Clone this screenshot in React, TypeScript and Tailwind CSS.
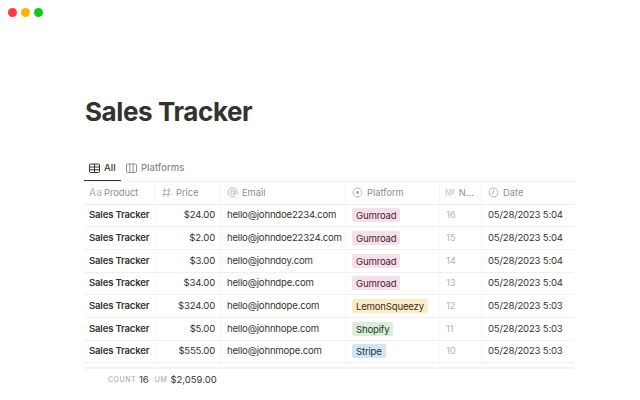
import * as React from "react";

const rows = [
  { price: "$24.00", email: "hello@johndoe2234.com", platform: "Gumroad", n: 16, date: "05/28/2023 5:04" },
  { price: "$2.00", email: "hello@johndoe22324.com", platform: "Gumroad", n: 15, date: "05/28/2023 5:04" },
  { price: "$3.00", email: "hello@johndoy.com", platform: "Gumroad", n: 14, date: "05/28/2023 5:04" },
  { price: "$34.00", email: "hello@johndpe.com", platform: "Gumroad", n: 13, date: "05/28/2023 5:04" },
  { price: "$324.00", email: "hello@johndope.com", platform: "LemonSqueezy", n: 12, date: "05/28/2023 5:03" },
  { price: "$5.00", email: "hello@johnhope.com", platform: "Shopify", n: 11, date: "05/28/2023 5:03" },
  { price: "$555.00", email: "hello@johnmope.com", platform: "Stripe", n: 10, date: "05/28/2023 5:03" },
];

const tagClass: Record<string, string> = {
  Gumroad: "bg-[#f5e0e9] text-[#4c2337]",
  LemonSqueezy: "bg-[#fbecc8] text-[#402c1b]",
  Shopify: "bg-[#dbeddb] text-[#1c3829]",
  Stripe: "bg-[#d3e5ef] text-[#183347]",
};

const HeadIcon = ({ children }: { children: React.ReactNode }) => (
  <svg width="11" height="11" viewBox="0 0 12 12" fill="none" stroke="#b0afac" strokeWidth="1" className="shrink-0">
    {children}
  </svg>
);

export default function App() {
  return (
    <div className="w-[640px] h-[400px] overflow-hidden bg-white flex flex-col font-['Inter',sans-serif] text-[#37352f]">
      <div className="flex gap-[4px] pl-[8px] pt-[8px] h-[98px]">
        <span className="w-[9px] h-[9px] rounded-full bg-[#f83b45]" />
        <span className="w-[9px] h-[9px] rounded-full bg-[#fdb10a]" />
        <span className="w-[9px] h-[9px] rounded-full bg-[#12c81e]" />
      </div>

      <div className="pl-[85px] h-[61px]">
        <h1 className="text-[26px] leading-[28px] font-bold text-[#33322e] tracking-[-0.4px]">Sales Tracker</h1>
      </div>

      {/* view tabs */}
      <div className="ml-[84px] flex h-[22px] text-[9.5px] leading-[12px]">
        <div className="w-[37px] pl-[5px] pt-[3px] flex gap-[4px] items-start border-b-[1.5px] border-[#37352f] font-medium">
          <svg width="11" height="11" viewBox="0 0 11 11" fill="none" stroke="#37352f" strokeWidth="1" className="mt-[1px] shrink-0">
            <rect x="0.5" y="1" width="10" height="8.5" rx="1" />
            <path d="M0.5 4H10.5M0.5 6.8H10.5M5.5 1V9.5" />
          </svg>
          All
        </div>
        <div className="pl-[5px] pt-[3px] flex gap-[4px] items-start text-[#8a8986] font-medium">
          <svg width="11" height="11" viewBox="0 0 11 11" fill="none" stroke="#8f8e8a" strokeWidth="1" className="mt-[1px] shrink-0">
            <rect x="0.5" y="1" width="10" height="8.5" rx="1" />
            <path d="M3.8 1V9.5M7.2 1V9.5" />
          </svg>
          Platforms
        </div>
      </div>

      {/* table */}
      <div className="ml-[84px] w-[490px] text-[9.6px] tracking-[-0.2px]">
        <div className="flex h-[23.5px] items-center border-b border-t border-[#efefee] text-[#8f8e8a] tracking-[0px] text-[9.3px]">
          <div className="w-[71px] h-full flex items-center pl-[5px] border-r border-[#f3f3f2]">
            <span className="text-[#b0afac] text-[10px] w-[15px] tracking-[0.5px]">Aa</span>
            <span>Product</span>
          </div>
          <div className="w-[66px] h-full flex items-center gap-[4px] pl-[6px] border-r border-[#f3f3f2]">
            <HeadIcon>
              <path d="M4.2 1L3 11M8.7 1L7.5 11M1.2 4H10.8M1 8H10.5" />
            </HeadIcon>
            Price
          </div>
          <div className="w-[125px] h-full flex items-center gap-[4px] pl-[6px] border-r border-[#f3f3f2]">
            <HeadIcon>
              <circle cx="6" cy="6" r="2.2" />
              <path d="M8.2 3.8V7c0 1.7 2.8 1.5 2.8-1A5 5 0 1 0 8.8 10" />
            </HeadIcon>
            Email
          </div>
          <div className="w-[94px] h-full flex items-center gap-[4px] pl-[6px] border-r border-[#f3f3f2]">
            <HeadIcon>
              <circle cx="6" cy="6" r="4.8" />
              <circle cx="6" cy="6" r="1.6" fill="#a5a4a1" stroke="none" />
            </HeadIcon>
            Platform
          </div>
          <div className="w-[42px] h-full flex items-center gap-[3px] pl-[5px] border-r border-[#f3f3f2]">
            <span className="text-[#c4c3c0] text-[9px]">№</span>
            <span className="ml-[1px]">N...</span>
          </div>
          <div className="flex-1 h-full flex items-center gap-[4px] pl-[6px]">
            <HeadIcon>
              <circle cx="6" cy="6" r="4.8" />
              <path d="M6 3V6L4 7.5" />
            </HeadIcon>
            Date
          </div>
        </div>

        {rows.map((r) => (
          <div key={r.n} className="flex h-[22.7px] items-center border-b border-[#f1f1f0]">
            <div className="w-[71px] h-full flex items-center pl-[5px] border-r border-[#f7f7f6] font-semibold text-[#37352f] whitespace-nowrap">
              Sales Tracker
            </div>
            <div className="w-[66px] h-full flex items-center justify-end pr-[5px] border-r border-[#f7f7f6] text-[#37352f]">
              {r.price}
            </div>
            <div className="w-[125px] h-full flex items-center pl-[6px] border-r border-[#f7f7f6] text-[#37352f] whitespace-nowrap">
              {r.email}
            </div>
            <div className="w-[94px] h-full flex items-center pl-[6px] border-r border-[#f7f7f6]">
              <span className={`px-[4px] h-[14px] leading-[15px] rounded-[2px] ${tagClass[r.platform]}`}>{r.platform}</span>
            </div>
            <div className="w-[42px] h-full flex items-center pl-[6px] border-r border-[#f7f7f6] text-[#b5b4b1]">{r.n}</div>
            <div className="flex-1 h-full flex items-center pl-[6px] text-[#37352f] whitespace-nowrap">{r.date}</div>
          </div>
        ))}

        <div className="flex h-[6px] border-b-2 border-[#f3f3f2]">
          <div className="w-[71px] border-r border-[#f7f7f6]" />
          <div className="w-[66px] border-r border-[#f7f7f6]" />
          <div className="w-[125px] border-r border-[#f7f7f6]" />
          <div className="w-[94px] border-r border-[#f7f7f6]" />
          <div className="w-[42px] border-r border-[#f7f7f6]" />
        </div>

        {/* footer totals */}
        <div className="flex items-center h-[22px] pl-[24px] text-[#37352f] tracking-[0px]">
          <span className="text-[7px] tracking-[0.5px] text-[#a5a4a1]">COUNT</span>
          <span className="ml-[3px] text-[9.6px]">16</span>
          <span className="ml-[6px] text-[7px] tracking-[0.5px] text-[#a5a4a1]">UM</span>
          <span className="ml-[3px] text-[9.5px]">$2,059.00</span>
        </div>
      </div>
    </div>
  );
}
